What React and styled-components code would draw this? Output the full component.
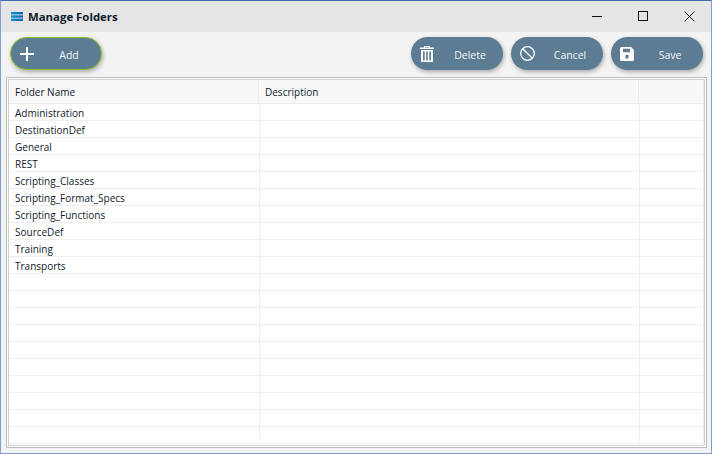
import React from 'react';
import styled, { createGlobalStyle } from 'styled-components';

const folders = [
  'Administration',
  'DestinationDef',
  'General',
  'REST',
  'Scripting_Classes',
  'Scripting_Format_Specs',
  'Scripting_Functions',
  'SourceDef',
  'Training',
  'Transports',
  '', '', '', '', '', '', '', '', '', '',
];

const PlusIcon = () => (
  <svg width="14" height="14" viewBox="0 0 14 14">
    <path d="M7 0v14M0 7h14" stroke="#fff" strokeWidth="2" fill="none" />
  </svg>
);

const TrashIcon = () => (
  <svg width="14" height="16" viewBox="0 0 14 16" fill="#fff">
    <path d="M4.5 0h5l.6 1.6H14v1.4H0V1.6h3.9zM5.2 1l-.2.6h4l-.2-.6z" fillRule="evenodd" />
    <path d="M1 4h12v12H1zM3 5.6v8.8h1.7V5.6zm3.2 0v8.8h1.6V5.6zm3.1 0v8.8H11V5.6z" fillRule="evenodd" />
  </svg>
);

const BanIcon = () => (
  <svg width="15" height="15" viewBox="0 0 15 15" fill="none" stroke="#fff" strokeWidth="1.3">
    <circle cx="7.5" cy="7.5" r="6.8" />
    <path d="M2.7 2.7l9.6 9.6" />
  </svg>
);

const SaveIcon = () => (
  <svg width="14" height="14" viewBox="0 0 14 14" fill="#fff">
    <path
      d="M1.5 0h9.5l3 3v9.5a1.5 1.5 0 0 1-1.5 1.5h-11A1.5 1.5 0 0 1 0 12.500v-11A1.5 1.500 0 0 1 1.500 0zM3 1.800v3.400h7V1.800zM5.500 8v3.500h3V8z"
      fillRule="evenodd"
    />
  </svg>
);

const AppIcon = () => (
  <svg width="12" height="9" viewBox="0 0 12 9">
    <defs>
      <linearGradient id="bar" x1="0" y1="0" x2="1" y2="0">
        <stop offset="0" stopColor="#0f8fd6" />
        <stop offset="1" stopColor="#1565a8" />
      </linearGradient>
    </defs>
    <rect y="0" width="12" height="2.4" fill="url(#bar)" />
    <rect y="3.3" width="12" height="2.4" fill="url(#bar)" />
    <rect y="6.6" width="12" height="2.4" fill="url(#bar)" />
  </svg>
);

const App = () => (
  <>
    <GlobalStyle />
    <Window>
      <TitleBar>
        <TitleLeft>
          <AppIcon />
          <Title>Manage Folders</Title>
        </TitleLeft>
        <WindowControls>
          <ControlButton>
            <svg width="11" height="11" viewBox="0 0 11 11">
              <path d="M0 5.5h10" stroke="#111" strokeWidth="1" />
            </svg>
          </ControlButton>
          <ControlButton>
            <svg width="11" height="11" viewBox="0 0 11 11">
              <rect x="0.5" y="0.5" width="9" height="9" stroke="#111" fill="none" />
            </svg>
          </ControlButton>
          <ControlButton>
            <svg width="11" height="11" viewBox="0 0 11 11">
              <path d="M0.500 0.500l10 10M10.500 0.500l-10 10" stroke="#111" strokeWidth="1" />
            </svg>
          </ControlButton>
        </WindowControls>
      </TitleBar>
      <Toolbar>
        <ActionButton focused>
          <IconSlot><PlusIcon /></IconSlot>
          <ButtonLabel>Add</ButtonLabel>
        </ActionButton>
        <Spacer />
        <ActionButton>
          <IconSlot><TrashIcon /></IconSlot>
          <ButtonLabel>Delete</ButtonLabel>
        </ActionButton>
        <ActionButton>
          <IconSlot><BanIcon /></IconSlot>
          <ButtonLabel>Cancel</ButtonLabel>
        </ActionButton>
        <ActionButton>
          <IconSlot><SaveIcon /></IconSlot>
          <ButtonLabel>Save</ButtonLabel>
        </ActionButton>
      </Toolbar>
      <TableFrame>
        <TableInner>
          <HeaderRow>
            <HeaderCell>Folder Name</HeaderCell>
            <HeaderCell>Description</HeaderCell>
            <HeaderCell />
          </HeaderRow>
          {folders.map((name, i) => (
            <Row key={i}>
              <Cell>{name}</Cell>
              <Cell />
              <Cell />
            </Row>
          ))}
        </TableInner>
      </TableFrame>
    </Window>
  </>
);

export default App;

const GlobalStyle = createGlobalStyle`
  html, body {
    margin: 0;
    padding: 0;
    background: #f0f0f0;
  }
  * {
    box-sizing: border-box;
  }
`;

const Window = styled.div`
  width: 712px;
  height: 454px;
  display: flex;
  flex-direction: column;
  background: #f3f3f3;
  border-top: 1px solid #3f6aa5;
  border-left: 1px solid #7f9fd0;
  border-right: 1px solid #7f9fd0;
  border-bottom: 1px solid #7f9fd0;
  font-family: 'Open Sans', sans-serif;
  overflow: hidden;
`;

const TitleBar = styled.div`
  height: 31px;
  flex-shrink: 0;
  display: flex;
  align-items: center;
  justify-content: space-between;
  background: #e5e5e5;
  padding-left: 10px;
`;

const TitleLeft = styled.div`
  display: flex;
  align-items: center;
  gap: 5px;
`;

const Title = styled.span`
  font-size: 11.4px;
  font-weight: 700;
  color: #0f1a2a;
`;

const WindowControls = styled.div`
  display: flex;
  padding-right: 0;
`;

const ControlButton = styled.div`
  width: 46px;
  height: 31px;
  display: flex;
  align-items: center;
  justify-content: center;
  padding-left: 2px;
`;

const Toolbar = styled.div`
  height: 45px;
  flex-shrink: 0;
  display: flex;
  align-items: flex-start;
  gap: 8px;
  padding: 5px 8px 0 9px;
`;

const Spacer = styled.div`
  flex: 1;
`;

const ActionButton = styled.div`
  width: 92px;
  height: 33px;
  display: flex;
  align-items: center;
  border-radius: 17px;
  background: #5c7c93;
  border: ${(props) => (props.focused ? '1px solid #8fc31f' : 'none')};
  box-shadow: 1px 2px 4px rgba(0, 0, 0, 0.3);
  color: #fff;
`;

const IconSlot = styled.div`
  width: 32px;
  display: flex;
  justify-content: center;
`;

const ButtonLabel = styled.span`
  flex: 1;
  text-align: center;
  font-size: 10.5px;
  color: #f4f6f8;
  padding: 2px 6px 0 0;
`;

const TableFrame = styled.div`
  flex: 1;
  margin: 0 4px 5px 5px;
  border: 1px solid #bdbdbd;
  padding: 1px;
  background: #fff;
  overflow: hidden;
`;

const TableInner = styled.div`
  height: 100%;
  border: 1px solid #cfcfcf;
  overflow: hidden;
`;

const HeaderRow = styled.div`
  height: 24px;
  display: grid;
  grid-template-columns: 250px 380px 1fr;
  background: #f8f8f8;
  border-bottom: 1px solid #ececec;
`;

const HeaderCell = styled.div`
  display: flex;
  align-items: center;
  padding: 1px 0 0 6px;
  font-size: 10px;
  color: #0f1a2a;
  border-right: 1px solid #ececec;
`;

const Row = styled.div`
  height: 17px;
  display: grid;
  grid-template-columns: 251px 380px 1fr;
  background: #fff;
  border-bottom: 1px solid #eeeeee;
`;

const Cell = styled.div`
  display: flex;
  align-items: center;
  padding: 1px 0 0 6px;
  font-size: 10px;
  color: #0f1a2a;
  border-right: 1px solid #eeeeee;
  white-space: nowrap;
`;
